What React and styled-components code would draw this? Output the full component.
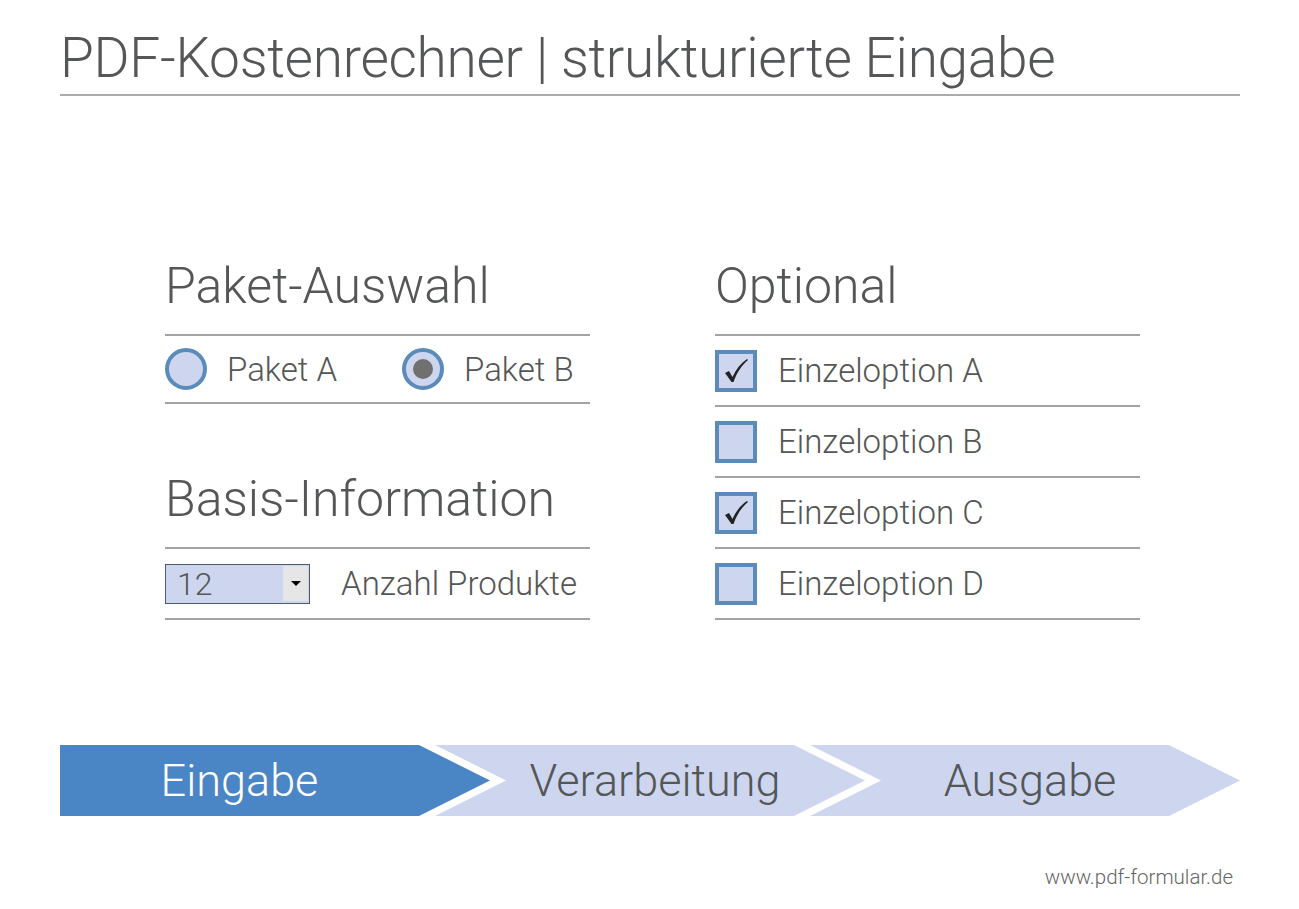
import React from "react";
import styled, { createGlobalStyle } from "styled-components";

const Global = createGlobalStyle`
  html, body { margin: 0; padding: 0; background: #ffffff; }
  body { font-family: Roboto, "Liberation Sans", sans-serif; }
`;

const FONT = `Roboto, "Liberation Sans", sans-serif`;
const TEXT = "#555657";
const FRAME = "#5b8bb8";
const FILL = "#cdd6ee";
const RULE = "#a3a3a3";

const Page = styled.div`
  width: 1299px;
  height: 909px;
  box-sizing: border-box;
  padding: 0 59px 0 60px;
  display: flex;
  flex-direction: column;
  font-family: ${FONT};
  color: ${TEXT};
`;

const Header = styled.header`
  padding: 28px 0 6px;
  border-bottom: 2px solid #acacac;
`;

const Title = styled.h1`
  margin: 0;
  font-size: 55px;
  font-weight: 300;
  line-height: 60px;
  letter-spacing: -0.3px;
  white-space: nowrap;
`;

const Main = styled.main`
  display: grid;
  grid-template-columns: 425px 425px;
  column-gap: 125px;
  padding-left: 105px;
  margin-top: 97px;
`;

const Column = styled.section`
  display: flex;
  flex-direction: column;
`;

const Heading = styled.h2`
  margin: 0;
  height: ${(p) => p.$h}px;
  display: flex;
  align-items: flex-end;
  padding-bottom: 22px;
  box-sizing: border-box;
  font-size: 50px;
  font-weight: 300;
  line-height: 52px;
  white-space: nowrap;
`;

const Row = styled.div`
  height: ${(p) => p.$h || 71}px;
  box-sizing: border-box;
  border-top: 2px solid ${RULE};
  border-bottom: ${(p) => (p.$last ? `2px solid ${RULE}` : "none")};
  display: flex;
  align-items: center;
  font-size: 33px;
  font-weight: 300;
  white-space: nowrap;
`;

const RadioItem = styled.label`
  display: flex;
  align-items: center;
  width: ${(p) => p.$w}px;
  gap: 20px;
`;

const Radio = styled.span`
  width: 42px;
  height: 42px;
  box-sizing: border-box;
  border-radius: 50%;
  border: 4px solid ${FRAME};
  background: ${FILL};
  display: flex;
  align-items: center;
  justify-content: center;
  flex: none;
  &::after {
    content: "";
    width: 20px;
    height: 20px;
    border-radius: 50%;
    background: #707070;
    display: ${(p) => (p.$on ? "block" : "none")};
  }
`;

const Select = styled.div`
  width: 145px;
  height: 40px;
  box-sizing: border-box;
  border: 1px solid #4f5a6a;
  background: ${FILL};
  display: flex;
  align-items: center;
  justify-content: space-between;
  padding: 0 1px 0 11px;
  margin-right: 31px;
  font-size: 32px;
  font-weight: 300;
`;

const SelectButton = styled.span`
  width: 25px;
  height: 35px;
  background: #e6e6e6;
  display: flex;
  align-items: center;
  justify-content: center;
  &::after {
    content: "";
    border-left: 5px solid transparent;
    border-right: 5px solid transparent;
    border-top: 5px solid #000;
  }
`;

const CheckBox = styled.span`
  width: 42px;
  height: 42px;
  box-sizing: border-box;
  border: 4px solid ${FRAME};
  background: ${FILL};
  display: flex;
  align-items: center;
  justify-content: center;
  margin-right: 21px;
  flex: none;
`;

const Steps = styled.nav`
  display: flex;
  margin-top: 125px;
  height: 71px;
`;

const Step = styled.div`
  width: 430px;
  flex: none;
  height: 71px;
  box-sizing: border-box;
  margin-left: ${(p) => (p.$first ? 0 : -55)}px;
  padding: ${(p) => (p.$first ? "0 71px 0 0" : "0 66px 0 76px")};
  background: ${(p) => (p.$active ? "#4a86c6" : FILL)};
  color: ${(p) => (p.$active ? "#ffffff" : TEXT)};
  clip-path: ${(p) =>
    p.$first
      ? "polygon(0 0, calc(100% - 71px) 0, 100% 50%, calc(100% - 71px) 100%, 0 100%)"
      : "polygon(0 0, calc(100% - 71px) 0, 100% 50%, calc(100% - 71px) 100%, 0 100%, 71px 50%)"};
  display: flex;
  align-items: center;
  justify-content: center;
  font-size: 45px;
  font-weight: 300;
  white-space: nowrap;
`;

const Footer = styled.footer`
  margin-top: 49px;
  text-align: right;
  padding-right: 7px;
  font-size: 20.5px;
  font-weight: 300;
  color: #666;
`;

const Check = () => (
  <svg width="26" height="26" viewBox="0 0 26 26">
    <path
      d="M2 15 L6 13 L9.5 19 C13 11 18 5 24 1 L25 2 C19 7 14 14 10.5 24 L8.5 24 Z"
      fill="#222"
    />
  </svg>
);

const options = [
  { label: "Einzeloption A", on: true },
  { label: "Einzeloption B", on: false },
  { label: "Einzeloption C", on: true },
  { label: "Einzeloption D", on: false },
];

export default function App() {
  return (
    <>
      <Global />
      <Page>
        <Header>
          <Title>PDF-Kostenrechner | strukturierte Eingabe</Title>
        </Header>
        <Main>
          <Column>
            <Heading $h={141}>Paket-Auswahl</Heading>
            <Row $h={70} $last>
              <RadioItem $w={237}>
                <Radio />
                Paket A
              </RadioItem>
              <RadioItem>
                <Radio $on />
                Paket B
              </RadioItem>
            </Row>
            <Heading $h={143}>Basis-Information</Heading>
            <Row $h={73} $last>
              <Select>
                12
                <SelectButton />
              </Select>
              Anzahl Produkte
            </Row>
          </Column>
          <Column>
            <Heading $h={141}>Optional</Heading>
            {options.map((o, i) => (
              <Row key={o.label} $h={i === options.length - 1 ? 73 : 71} $last={i === options.length - 1}>
                <CheckBox>{o.on && <Check />}</CheckBox>
                {o.label}
              </Row>
            ))}
          </Column>
        </Main>
        <Steps>
          <Step $first $active>Eingabe</Step>
          <Step>Verarbeitung</Step>
          <Step>Ausgabe</Step>
        </Steps>
        <Footer>www.pdf-formular.de</Footer>
      </Page>
    </>
  );
}
